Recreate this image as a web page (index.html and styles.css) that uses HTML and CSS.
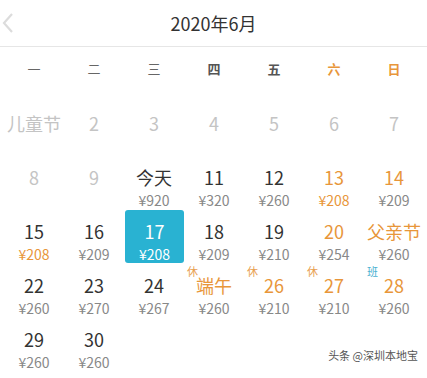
FILE: index.html
```html
<!DOCTYPE html>
<html lang="zh">
<head>
<meta charset="utf-8">
<link rel="stylesheet" href="styles.css">
</head>
<body>
<div class="cal">
  <div class="header">
    <div class="back"><svg width="14" height="22" viewBox="0 0 14 22"><polyline points="11,2 3,11 11,20" fill="none" stroke="#dcdcdc" stroke-width="2.2"/></svg></div>
    <div class="title">2020年6月</div>
    <div></div>
  </div>
  <div class="weekdays">
    <div class="lt">一</div><div class="lt">二</div><div class="lt">三</div><div>四</div><div>五</div><div class="we">六</div><div class="we">日</div>
  </div>
  <div class="days">
    <div class="cell past"><span class="num">儿童节</span></div>
    <div class="cell past"><span class="num">2</span></div>
    <div class="cell past"><span class="num">3</span></div>
    <div class="cell past"><span class="num">4</span></div>
    <div class="cell past"><span class="num">5</span></div>
    <div class="cell past"><span class="num">6</span></div>
    <div class="cell past"><span class="num">7</span></div>

    <div class="cell past"><span class="num">8</span></div>
    <div class="cell past"><span class="num">9</span></div>
    <div class="cell"><span class="num">今天</span><span class="price">¥920</span></div>
    <div class="cell"><span class="num">11</span><span class="price">¥320</span></div>
    <div class="cell"><span class="num">12</span><span class="price">¥260</span></div>
    <div class="cell"><span class="num or">13</span><span class="price or">¥208</span></div>
    <div class="cell"><span class="num or">14</span><span class="price">¥209</span></div>

    <div class="cell"><span class="num">15</span><span class="price or">¥208</span></div>
    <div class="cell"><span class="num">16</span><span class="price">¥209</span></div>
    <div class="cell sel"><span class="num">17</span><span class="price">¥208</span></div>
    <div class="cell"><span class="num">18</span><span class="price">¥209</span></div>
    <div class="cell"><span class="num">19</span><span class="price">¥210</span></div>
    <div class="cell"><span class="num or">20</span><span class="price">¥254</span></div>
    <div class="cell"><span class="num or">父亲节</span><span class="price">¥260</span></div>

    <div class="cell"><span class="num">22</span><span class="price">¥260</span></div>
    <div class="cell"><span class="num">23</span><span class="price">¥270</span></div>
    <div class="cell"><span class="num">24</span><span class="price">¥267</span></div>
    <div class="cell"><span class="tag">休</span><span class="num or">端午</span><span class="price">¥260</span></div>
    <div class="cell"><span class="tag">休</span><span class="num or">26</span><span class="price">¥210</span></div>
    <div class="cell"><span class="tag">休</span><span class="num or">27</span><span class="price">¥210</span></div>
    <div class="cell"><span class="tag ban">班</span><span class="num or">28</span><span class="price">¥260</span></div>

    <div class="cell"><span class="num">29</span><span class="price">¥260</span></div>
    <div class="cell"><span class="num">30</span><span class="price">¥260</span></div>
  </div>
  <div class="mark">头条 @深圳本地宝</div>
</div>
</body>
</html>
```
FILE: styles.css
```css
html, body {
  margin: 0;
  padding: 0;
  background: #fff;
}
.cal {
  position: relative;
  width: 427px;
  height: 378px;
  overflow: hidden;
  font-family: "Noto Sans CJK SC", "Noto Sans", sans-serif;
  color: #333;
}
.header {
  display: grid;
  grid-template-columns: 40px 1fr 40px;
  align-items: center;
  height: 46px;
  border-bottom: 1px solid #e6e6e6;
}
.back {
  display: flex;
  align-items: center;
  padding-left: 1px;
}
.title {
  text-align: center;
  font-size: 18px;
  color: #333;
}
.weekdays {
  display: grid;
  grid-template-columns: repeat(7, 60px);
  padding-left: 4px;
  height: 42px;
  align-items: center;
  font-size: 13px;
  font-weight: 600;
  color: #555;
}
.weekdays div {
  text-align: center;
}
.weekdays .lt {
  font-weight: 400;
  color: #666;
}
.weekdays .we {
  color: #e8963a;
}
.days {
  display: grid;
  grid-template-columns: repeat(7, 60px);
  grid-auto-rows: 54px;
  padding-left: 4px;
  margin-top: 13px;
}
.cell {
  position: relative;
  display: flex;
  flex-direction: column;
  align-items: center;
  padding-top: 8px;
  box-sizing: border-box;
}
.num {
  font-size: 18px;
  line-height: 26px;
  color: #333;
}
.price {
  font-size: 14px;
  line-height: 20px;
  color: #888;
}
.or {
  color: #e8963a !important;
}
.past .num {
  color: #c4c4c4;
}
.sel {
  background: #29b2d2;
  border-radius: 3px;
  margin-left: 1px;
  height: 53px;
}
.sel .num, .sel .price {
  color: #fff;
}
.tag {
  position: absolute;
  left: 3px;
  top: 1px;
  font-size: 11px;
  line-height: 12px;
  color: #e8a050;
}
.tag.ban {
  color: #4ab0d0;
}
.mark {
  position: absolute;
  right: 9px;
  bottom: 15px;
  font-size: 11px;
  color: #555;
  text-shadow: 0 0 2px #fff;
}
```
